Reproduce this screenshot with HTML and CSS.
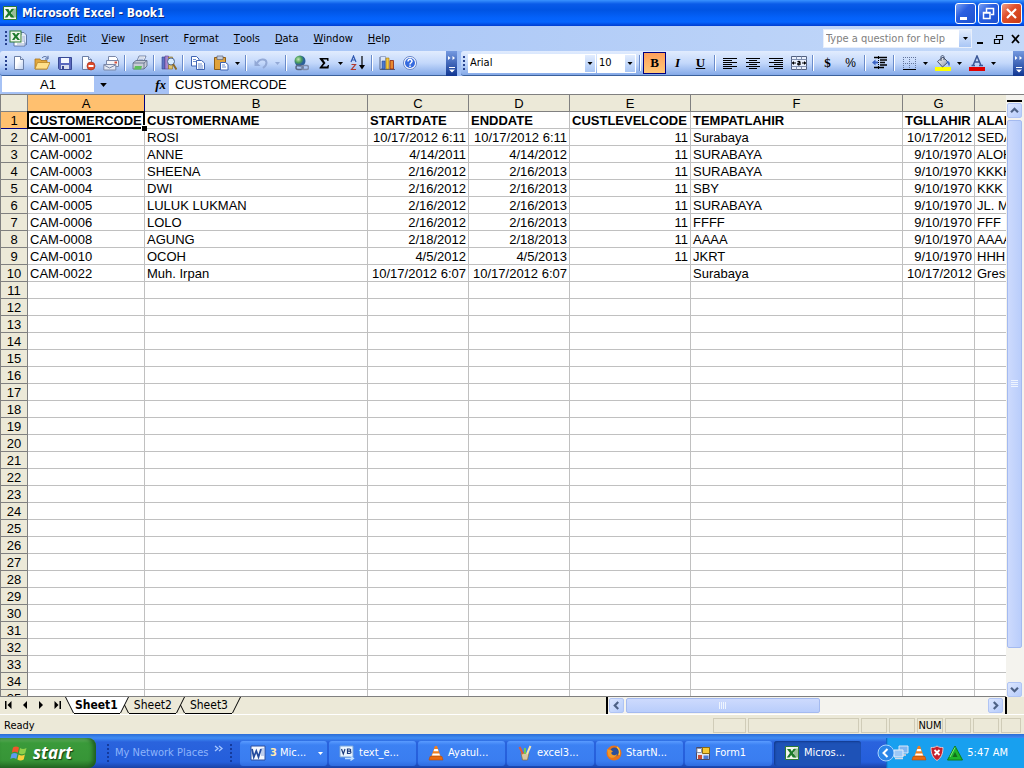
FILE: index.html
```html
<!DOCTYPE html>
<html lang="en">
<head>
<meta charset="utf-8">
<title>Microsoft Excel - Book1</title>
<link rel="stylesheet" href="styles.css">
</head>
<body>
<svg class="defs" aria-hidden="true">
  <defs>
    <linearGradient id="paper" x1="0" y1="0" x2="1" y2="1"><stop offset="0.4" stop-color="#fff"/><stop offset="1" stop-color="#b9cdf0"/></linearGradient>
    <linearGradient id="metal" x1="0" y1="0" x2="1" y2="1"><stop offset="0" stop-color="#fff"/><stop offset="1" stop-color="#8a93a8"/></linearGradient>
    <radialGradient id="globe" cx="0.35" cy="0.35"><stop offset="0" stop-color="#bfe6b0"/><stop offset="0.6" stop-color="#4a9d5c"/><stop offset="1" stop-color="#2b5f9a"/></radialGradient>
  </defs>
  <symbol id="excel" viewBox="0 0 16 16">
    <path d="M1.500 1.500h13v13h-13z" fill="#f2f7ee" stroke="#2d7a35"/>
    <path d="M10 3h4v10h-4" fill="#c9dcc4"/>
    <path d="M10 5h4M10 7h4M10 9h4M10 11h4" stroke="#6fa46f"/>
    <path d="M3 4h3.400l1.400 2.400L9.400 4H12L9 8l3.300 4.500H8.900L7.200 10l-1.800 2.500H2.700L6 8z" fill="#1e7a2c"/>
  </symbol>
  <symbol id="down" viewBox="0 0 5 3"><path d="M0 0h5L2.500 3z" fill="currentColor"/></symbol>
  <symbol id="cone" viewBox="0 0 16 16">
    <path d="M7 1h2l4 11H3z" fill="#f08020"/><path d="M6.300 4h3.400l.8 2.300h-5zM4.700 8.500h6.600l.7 2H4z" fill="#fff"/><path d="M2 11.500h12l1 3.500H1z" fill="#e86a10" stroke="#b94c08" stroke-width=".6"/>
  </symbol>
</svg>

<header class="titlebar">
  <svg class="i16"><use href="#excel"/></svg>
  <h1>Microsoft Excel - Book1</h1>
  <div class="winbtns">
    <button aria-label="Minimize"><svg viewBox="0 0 19 19"><path d="M4 13h7v3H4z" fill="#fff"/></svg></button>
    <button aria-label="Restore"><svg viewBox="0 0 19 19"><path d="M7.500 8V4.500h7v6H12M7 4.500h8" fill="none" stroke="#fff" stroke-width="1.500"/><path d="M4.500 8.500h6.500v6H4.500zM4 9h7.500" fill="none" stroke="#fff" stroke-width="1.500"/></svg></button>
    <button class="close" aria-label="Close"><svg viewBox="0 0 19 19"><path d="M5 5l9 9M14 5l-9 9" stroke="#fff" stroke-width="2.200"/></svg></button>
  </div>
</header>

<nav class="menubar" aria-label="Menu">
  <span class="grip"></span>
  <svg class="doc" viewBox="0 0 18 18"><path d="M5 4h11v12H5z" fill="#fff" stroke="#6079a8"/><path d="M12 2.500h3l2.500 2.500v10" fill="#dfe8fa" stroke="#6079a8"/><path d="M13 7h3M13 9h3M13 11h3M8 14h7" stroke="#9cb0d5"/><rect x="1" y="1" width="11" height="11" fill="#eef6ea" stroke="#2d7a35"/><path d="M3 3h2.500L7 5l1.500-2H11L8.200 6.500 11 10H8.500L6.800 8 5.300 10H3l2.500-3.500z" fill="#1e7a2c"/></svg>
  <button><u>F</u>ile</button>
  <button><u>E</u>dit</button>
  <button><u>V</u>iew</button>
  <button><u>I</u>nsert</button>
  <button>F<u>o</u>rmat</button>
  <button><u>T</u>ools</button>
  <button><u>D</u>ata</button>
  <button><u>W</u>indow</button>
  <button><u>H</u>elp</button>
  <div class="ask">
    <input type="text" aria-label="Type a question for help" placeholder="Type a question for help">
    <button aria-label="Recent questions"><svg class="arrow"><use href="#down"/></svg></button>
  </div>
  <div class="mdi">
    <button aria-label="Minimize workbook"><svg viewBox="0 0 12 12"><path d="M2 9h6v2H2z"/></svg></button>
    <button aria-label="Restore workbook"><svg viewBox="0 0 12 12"><path d="M4.500 5V2.500h6v4H8M4 2.500h7M2.500 6.500h5v4h-5zM2 6.500h6" fill="none" stroke="#000" stroke-width="1.200"/></svg></button>
    <button aria-label="Close workbook"><svg viewBox="0 0 12 12"><path d="M3 2l7 8M10 2l-7 8" stroke="#000" stroke-width="1.800"/></svg></button>
  </div>
</nav>

<div class="toolbars">
  <div class="toolbar standard" role="toolbar" aria-label="Standard">
    <span class="grip"></span>
    <button aria-label="New"><svg class="i16" viewBox="0 0 16 16"><path d="M3.500 1.500h6l3 3v10h-9z" fill="url(#paper)" stroke="#6b7fa6"/><path d="M9.500 1.500v3h3" fill="#dbe6f9" stroke="#6b7fa6"/></svg></button>
    <button aria-label="Open"><svg class="i16" viewBox="0 0 16 16"><path d="M1 4h5l1 1.500h6V14H1z" fill="#e3a83c" stroke="#a8741c" stroke-width=".8"/><path d="M3.500 7.500H16L13 14H1z" fill="#ffe08a" stroke="#b6852a" stroke-width=".8"/><path d="M8 3c2-2 4-2 5.500 0M14 .8V4h-3" fill="none" stroke="#48639c"/></svg></button>
    <button aria-label="Save"><svg class="i16" viewBox="0 0 16 16"><path d="M1.500 2.500h13v12h-12l-1-1z" fill="#5a68bd" stroke="#384a94"/><path d="M4 3h8v5H4z" fill="#f4f7ff"/><path d="M4 10h8v4H4z" fill="#d7dcee"/><path d="M5 11h2v3H5z" fill="#38458f"/></svg></button>
    <button aria-label="Permission"><svg class="i16" viewBox="0 0 16 16"><path d="M2.500 1.500h6l3 3v10h-9z" fill="url(#paper)" stroke="#6b7fa6"/><path d="M8.500 1.500v3h3" fill="#dbe6f9" stroke="#6b7fa6"/><circle cx="11" cy="11" r="4" fill="#dc4a2a" stroke="#a22a12" stroke-width=".6"/><path d="M8.500 10h5v2h-5z" fill="#fff"/></svg></button>
    <button aria-label="E-mail"><svg class="i16" viewBox="0 0 16 16"><path d="M5.500 5V1.500h7l2 2V9" fill="#fff" stroke="#7b88a8"/><path d="M3.500 5.500h12v6h-12z" fill="#f4f4f8" stroke="#7b88a8"/><path d="M.8 9.500h12v5.500H.8z" fill="#e4e8f2" stroke="#7b88a8"/><path d="M1 10l5.500 3L12.500 10" fill="none" stroke="#7b88a8"/><path d="M11.500 6.500h2.500v2h-2.500z" fill="#d8503a"/></svg></button>
    <span class="sep"></span>
    <button aria-label="Print"><svg class="i16" viewBox="0 0 16 16"><path d="M5 6l2-5h7l-2 5z" fill="#fff" stroke="#5d6f95" stroke-width=".8"/><path d="M1 8l3-2.500h11V11l-3 3H1z" fill="#c7ccd6" stroke="#596783" stroke-width=".8"/><path d="M1 8h11l3-2.500M12 8v6" fill="none" stroke="#596783" stroke-width=".8"/><path d="M3 11h7l-1 3.500H2z" fill="#5fbf5b"/><path d="M7 3h5M6.500 4.500h5" stroke="#8aa0cc" stroke-width=".7"/></svg></button>
    <span class="sep"></span>
    <button aria-label="Research"><svg class="i16" viewBox="0 0 16 16"><path d="M1 2h3v12H1z" fill="#5d72c4" stroke="#33458e" stroke-width=".6"/><path d="M4 1h3.500v13H4z" fill="#a886cf" stroke="#5e3f91" stroke-width=".6"/><path d="M7.500 2h4v12h-4z" fill="#e2c268" stroke="#8b6d20" stroke-width=".6"/><circle cx="10" cy="6.500" r="3.500" fill="#d8ecff" stroke="#4d6590"/><path d="M12 9l3.500 5.500" stroke="#8a6a2a" stroke-width="2"/></svg></button>
    <span class="sep"></span>
    <button aria-label="Copy"><svg class="i16" viewBox="0 0 16 16"><path d="M1.500 1.500h5l2.500 2.500v7H1.500z" fill="#fff" stroke="#3f64b3"/><path d="M6.500 5.500h5L14.500 8v6.500h-8z" fill="#fff" stroke="#3f64b3"/><path d="M3 4.500h3M3 6.500h3M8 9h4M8 11h5M8 13h5" stroke="#6c8dcf"/></svg></button>
    <button aria-label="Paste"><svg class="i16" viewBox="0 0 16 16"><path d="M1.500 2.500h11v12h-11z" fill="#e0a23a" stroke="#8c5d18"/><path d="M4 1h6v3.500H4z" fill="#c6ccd8" stroke="#59637c" stroke-width=".7"/><path d="M7.500 7.500h5l2.500 2v5.500H7.500z" fill="#fff" stroke="#3f64b3"/><path d="M9 10h3M9 12h4" stroke="#6c8dcf"/></svg></button>
    <button class="drop" aria-label="Paste options"><svg class="arrow"><use href="#down"/></svg></button>
    <span class="sep"></span>
    <button class="off" aria-label="Undo" disabled><svg class="i16" viewBox="0 0 16 16"><path d="M4 8.500C6 3.500 13 3 13.500 7.500c.2 2.500-1.500 4-3.500 5.500" fill="none" stroke="#93a9d6" stroke-width="2"/><path d="M1.500 5v6h6z" fill="#93a9d6"/></svg></button>
    <button class="drop off" aria-label="Undo list" disabled><svg class="arrow"><use href="#down"/></svg></button>
    <span class="sep"></span>
    <button aria-label="Insert Hyperlink"><svg class="i16" viewBox="0 0 16 16"><circle cx="7" cy="6" r="5.500" fill="url(#globe)"/><rect x="3" y="10.500" width="7" height="4" rx="2" fill="none" stroke="#5a6885" stroke-width="1.500"/><rect x="8.500" y="10.500" width="7" height="4" rx="2" fill="none" stroke="#7e8cab" stroke-width="1.500"/></svg></button>
    <button aria-label="AutoSum"><svg class="i16" viewBox="0 0 16 16"><path d="M3.500 3h9v3h-1l-.7-1.500H7L9.500 8 6.500 11.500h4.500L12 10h1l-.5 3.500h-9v-.7L7 8.300 3.500 3.700z"/></svg></button>
    <button class="drop" aria-label="AutoSum options"><svg class="arrow"><use href="#down"/></svg></button>
    <button aria-label="Sort Ascending"><svg class="i16" viewBox="0 0 16 16"><path d="M1 7l2.500-6L6 7M2 5h3" fill="none" stroke="#2e57b0" stroke-width="1.200"/><path d="M1.500 9.500h4l-4 5h4.500" fill="none" stroke="#b0392e" stroke-width="1.200"/><path d="M12 1v12" stroke="#000" stroke-width="1.200"/><path d="M9 10h6l-3 4.500z"/></svg></button>
    <span class="sep"></span>
    <button aria-label="Chart Wizard"><svg class="i16" viewBox="0 0 16 16"><path d="M1 2v12.500h15" fill="none" stroke="#52607f"/><path d="M1.500 1.500h5v12h-5z" fill="#dbe6f9" stroke="#7b8db5" stroke-width=".7"/><path d="M3 6h3v8H3z" fill="#4a78d0" stroke="#274a92" stroke-width=".6"/><path d="M7 3h3v11H7z" fill="#f4c63c" stroke="#9c7610" stroke-width=".6"/><path d="M11 5.500h3.500V14H11z" fill="#e8892f" stroke="#8c2412" stroke-width=".8"/></svg></button>
    <button aria-label="Help"><svg class="i16" viewBox="0 0 16 16"><circle cx="8" cy="8" r="6.500" fill="#fff" stroke="#6583c8"/><circle cx="8" cy="8" r="5" fill="#356adf"/><path d="M6 6.500c0-3 4.200-2.700 4 0-.2 1.300-2 1.300-2 3M8 10.500v1.600" fill="none" stroke="#fff" stroke-width="1.500"/></svg></button>
    <button class="more" aria-label="Standard toolbar options"><svg viewBox="0 0 8 22"><path d="M0 4l2.500 2L0 8zM4.500 4L7 6 4.500 8zM1 15h6v1H1zM1 17.500h6l-3 3z" fill="#fff"/></svg></button>
  </div>
  <div class="toolbar formatting" role="toolbar" aria-label="Formatting">
    <span class="grip"></span>
    <span class="combo font"><select aria-label="Font"><option>Arial</option></select><svg class="arrow"><use href="#down"/></svg></span>
    <span class="combo size"><select aria-label="Font Size"><option>10</option></select><svg class="arrow"><use href="#down"/></svg></span>
    <span class="sep"></span>
    <button class="on serif" aria-pressed="true" aria-label="Bold"><b>B</b></button>
    <button class="serif" aria-label="Italic"><i>I</i></button>
    <button class="serif" aria-label="Underline"><u>U</u></button>
    <span class="sep"></span>
    <button aria-label="Align Left"><svg class="i16" viewBox="0 0 16 16"><path d="M1 3.500h14M1 5.500h9M1 7.500h14M1 9.500h9M1 11.500h14M1 13.500h9" stroke="#000"/></svg></button>
    <button aria-label="Center"><svg class="i16" viewBox="0 0 16 16"><path d="M1 3.500h14M4 5.500h8M1 7.500h14M4 9.500h8M1 11.500h14M4 13.500h8" stroke="#000"/></svg></button>
    <button aria-label="Align Right"><svg class="i16" viewBox="0 0 16 16"><path d="M1 3.500h14M6 5.500h9M1 7.500h14M6 9.500h9M1 11.500h14M6 13.500h9" stroke="#000"/></svg></button>
    <button aria-label="Merge and Center"><svg class="i16" viewBox="0 0 16 16"><path d="M.5 1.500h15v13H.5z" fill="#e9f0fd" stroke="#53617f"/><path d="M.5 4.500h15M.5 11.500h15M5.500 1.500v3M10.500 1.500v3M5.500 11.500v3M10.500 11.500v3" stroke="#8090b0"/><path d="M1 8h4M11 8h4" stroke="#000"/><path d="M3 6v4L1 8zM13 6v4l2-2z"/><path d="M6.500 6.800c1-.8 2.500-.6 2.500.5V10M9 8c-3-.3-3 2.200-.5 1.800" fill="none" stroke="#000" stroke-width="1.200"/></svg></button>
    <span class="sep"></span>
    <button class="serif" aria-label="Currency Style">$</button>
    <button class="percent" aria-label="Percent Style">%</button>
    <span class="sep"></span>
    <button aria-label="Decrease Indent"><svg class="i16" viewBox="0 0 16 16"><path d="M2 2.500h13M8 5h7M8 7.500h5M8 10h7M2 12.500h10" stroke="#000" stroke-width="1.500"/><path d="M6.500 1v14" stroke="#000" stroke-dasharray="1 1"/><path d="M0 7.500l3.500-3v2H6v2H3.500v2z" fill="#3a63c4"/></svg></button>
    <span class="sep"></span>
    <button aria-label="Borders"><svg class="i16" viewBox="0 0 16 16"><path d="M2.500 2v12M8.500 2v12M14.500 2v12M2 2.500h12M2 8.500h12" stroke="#63759b" stroke-dasharray="1 1"/><path d="M2 14.500h13" stroke="#000"/></svg></button>
    <button class="drop" aria-label="Border options"><svg class="arrow"><use href="#down"/></svg></button>
    <button aria-label="Fill Color"><svg class="i16" viewBox="0 0 16 16"><path d="M0 12h16v4H0z" fill="#ffff00"/><path d="M2.500 6.500L8 2l5 5-5.500 5z" fill="url(#metal)" stroke="#46536e"/><path d="M6 6V2c0-2 3-2 3 0v3" fill="none" stroke="#46536e"/><path d="M12.500 6c2.500.5 3 3 1.500 5.500-.8-2-1-3.500-3-4.500z" fill="#3f6cc9"/></svg></button>
    <button class="drop" aria-label="Fill Color options"><svg class="arrow"><use href="#down"/></svg></button>
    <button aria-label="Font Color"><svg class="i16" viewBox="0 0 16 16"><path d="M0 12h16v4H0z" fill="#e00000"/><path d="M4 10.500L8 1l4 9.500M5.500 7h5M2.500 10.500h3.500M10 10.500h4" fill="none" stroke="#3b5796" stroke-width="1.500"/></svg></button>
    <button class="drop" aria-label="Font Color options"><svg class="arrow"><use href="#down"/></svg></button>
    <button class="more" aria-label="Formatting toolbar options"><svg viewBox="0 0 8 22"><path d="M0 4l2.500 2L0 8zM4.500 4L7 6 4.500 8zM1 15h6v1H1zM1 17.500h6l-3 3z" fill="#fff"/></svg></button>
  </div>
</div>

<div class="formulabar">
  <input class="namebox" type="text" aria-label="Name Box" value="A1">
  <button class="namedrop" aria-label="Names"><svg class="arrow"><use href="#down"/></svg></button>
  <button class="fx" aria-label="Insert Function"><i>fx</i></button>
  <input class="formula" type="text" aria-label="Formula" value="CUSTOMERCODE">
</div>

<main class="sheet">
  <div class="viewport">
    <table class="grid">
      <colgroup><col class="w-row"><col class="w-a"><col class="w-b"><col class="w-c"><col class="w-c"><col class="w-e"><col class="w-f"><col class="w-g"><col class="w-h"></colgroup>
      <thead><tr><th></th><th class="current">A</th><th>B</th><th>C</th><th>D</th><th>E</th><th>F</th><th>G</th><th></th></tr></thead>
      <tbody id="rows"></tbody>
    </table>
  </div>
  <div class="vscroll">
    <span class="split"></span>
    <button aria-label="Scroll up"><svg viewBox="0 0 15 15"><path d="M3.500 9.500l4-4 4 4" /></svg></button>
    <div class="track"><div class="thumb"><svg viewBox="0 0 8 8"><path d="M0 .5h7M0 2.500h7M0 4.500h7M0 6.500h7" stroke="#eef4fe"/></svg></div></div>
    <button aria-label="Scroll down"><svg viewBox="0 0 15 15"><path d="M3.500 5.500l4 4 4-4" /></svg></button>
  </div>
</main>

<div class="sheetbar">
  <div class="tabs">
    <div class="tabnav">
      <button aria-label="First sheet"><svg viewBox="0 0 8 8"><path d="M0 0h1.500v8H0zM6.500 0v8L2.500 4z"/></svg></button>
      <button aria-label="Previous sheet"><svg viewBox="0 0 8 8"><path d="M6 0v8L2 4z"/></svg></button>
      <button aria-label="Next sheet"><svg viewBox="0 0 8 8"><path d="M2 0v8l4-4z"/></svg></button>
      <button aria-label="Last sheet"><svg viewBox="0 0 8 8"><path d="M1.500 0v8l4-4zM6.500 0H8v8H6.500z"/></svg></button>
    </div>
    <svg class="slash" viewBox="0 0 9 17"><path d="M0 0h9v16H8z" fill="#fff"/><path d="M.5 0l8 16" stroke="#000"/></svg>
    <button class="active">Sheet1</button>
    <svg class="slash" viewBox="0 0 9 17"><path d="M0 0h9L1 16H0z" fill="#fff"/><path d="M4.500 8l4 8H.5z" fill="#ece9d8"/><path d="M8.500 0l-8 16M4.500 8l4 8" stroke="#000"/></svg>
    <button>Sheet2</button>
    <svg class="slash" viewBox="0 0 9 17"><path d="M8.500 0l-8 16M4.500 8l4 8" stroke="#000" /></svg>
    <button>Sheet3</button>
    <svg class="slash" viewBox="0 0 9 17"><path d="M8.500 0l-8 16" stroke="#000"/></svg>
    <span class="rest"></span>
  </div>
  <div class="hscroll">
    <button aria-label="Scroll left"><svg viewBox="0 0 15 15"><path d="M9.500 3.500l-4 4 4 4" /></svg></button>
    <div class="track"><div class="thumb"><svg viewBox="0 0 8 8"><path d="M.5 0v7M2.500 0v7M4.500 0v7M6.500 0v7" stroke="#eef4fe"/></svg></div></div>
    <button aria-label="Scroll right"><svg viewBox="0 0 15 15"><path d="M5.500 3.500l4 4-4 4" /></svg></button>
  </div>
  <span class="corner"></span>
</div>

<div class="status">
  <span class="ready">Ready</span>
  <span class="pane first"></span><span class="pane wide"></span><span class="pane"></span><span class="pane"></span><span class="pane">NUM</span><span class="pane"></span><span class="pane"></span><span class="pane last"></span>
</div>

<footer class="taskbar">
  <button class="start"><svg viewBox="0 0 18 18"><path d="M3 3.500c2-1.500 4-1.500 6 0L7.800 8.700c-2-1.400-4-1.400-6 0z" fill="#f0562c"/><path d="M10 4c2 1.300 4 1.300 6.500 0L15.200 9.200c-2.200 1.300-4.200 1.300-6.300 0z" fill="#8fd04a"/><path d="M1.500 10c2-1.400 4-1.400 6 0L6.300 15c-2-1.300-4-1.300-6 0z" fill="#5c9bf0"/><path d="M8.600 10.500c2 1.300 4 1.300 6.300 0l-1.200 5c-2.200 1.300-4.300 1.300-6.300 0z" fill="#fbd03c"/></svg><span>start</span></button>
  <div class="deskband"><span class="grip"></span><span>My Network Places</span><svg viewBox="0 0 10 8"><path d="M1 1l3 2.500L1 6M5 1l3 2.500L5 6" fill="none" stroke="#a6c6ff" stroke-width="1.300"/></svg></div>
  <span class="grip"></span>
  <div class="tasks">
    <button><svg class="i16" viewBox="0 0 16 16"><path d="M1 1h14v14H1z" fill="#f4f8ff" stroke="#2c4f9e"/><path d="M11 4h3M11 6h3M11 8h3M11 10h3" stroke="#89a5da"/><path d="M2 4l1.800 8L6.300 6l2.200 6L11 4" fill="none" stroke="#244a9d" stroke-width="1.800"/></svg><span><b>3</b> Mic...</span><svg class="arrow last"><use href="#down"/></svg></button>
    <button><svg class="i16" viewBox="0 0 16 16"><path d="M1 1h13v11H1z" fill="#eaf5ff" stroke="#7aa6d8"/><path d="M2.500 4l1.800 5L6 4M8.500 4v4.500h2c2 0 2-2.300 0-2.300 1.600 0 1.600-2.200 0-2.200zM8.500 6.200h2" fill="none" stroke="#1c3c7c" stroke-width="1.200"/><path d="M6 13.500h7.500M11.500 11l3 2.500-3 2" fill="none" stroke="#bfe0ff" stroke-width="1.300"/></svg><span>text_e...</span></button>
    <button><svg class="i16"><use href="#cone"/></svg><span>Ayatul...</span></button>
    <button><svg class="i16" viewBox="0 0 16 16"><path d="M4 8h8l-1.500 7h-5z" fill="#d9c8a0" stroke="#8a6c3a" stroke-width=".7"/><path d="M6 9L2.500 2" stroke="#e25b35" stroke-width="2"/><path d="M8 9V3" stroke="#6fca56" stroke-width="2"/><path d="M10 9l3.500-8" stroke="#f3e6b1" stroke-width="2"/></svg><span>excel3...</span></button>
    <button><svg class="i16" viewBox="0 0 16 16"><circle cx="8" cy="8" r="7.500" fill="#e8731c"/><circle cx="8.500" cy="7" r="4.500" fill="#2b4f9b"/><path d="M1 4c1 1 2 .5 4 1l2 1.500c-2 .5-2 2-1 3 2 1.500 4 .5 5.500-.5C10 13 5 14 2.500 11z" fill="#f49a28"/><path d="M11 2c2.500 2 3 5 2 8" fill="none" stroke="#ffc63c" stroke-width="1.300"/></svg><span>StartN...</span></button>
    <button><svg class="i16" viewBox="0 0 16 16"><path d="M1.500 2.500h13v12h-13z" fill="#dfe6f4" stroke="#4a4a6a"/><path d="M2 3.500h4.500v4H2z" fill="#fff" stroke="#8894b0"/><path d="M7.500 2.500h7v6h-7z" fill="#f6c936" stroke="#8a6a10"/><path d="M3 10h4v4H3z" fill="#c94c36"/><path d="M8.500 10.500h5V14h-5z" fill="#4c7ad2"/></svg><span>Form1</span></button>
    <button class="current"><svg class="i16"><use href="#excel"/></svg><span>Micros...</span></button>
  </div>
  <div class="tray">
    <button class="hide" aria-label="Hide inactive icons"><svg viewBox="0 0 18 18"><circle cx="9" cy="9" r="8" fill="#2a86e8" stroke="#a9d3ff"/><path d="M10.500 5l-4 4 4 4" fill="none" stroke="#fff" stroke-width="2"/></svg></button>
    <svg class="i16" viewBox="0 0 16 16"><path d="M6 1h9v7H6z" fill="#7eb6f2" stroke="#dce9f8"/><path d="M9 9h4v2H9z" fill="#b9c5d8"/><path d="M1 5h9v7H1z" fill="#9cc8f7" stroke="#e6effa"/><path d="M2 13.500h8" stroke="#d5dbe6" stroke-width="1.500"/></svg>
    <svg class="i16"><use href="#cone"/></svg>
    <svg class="i16" viewBox="0 0 16 16"><path d="M8 1c2 1.500 4 1.500 6 1.500C14 9 12 13 8 15.500 4 13 2 9 2 2.500 4 2.500 6 2.500 8 1z" fill="#c8202c" stroke="#e9c3c6"/><path d="M5.500 5l5 5M10.500 5l-5 5" stroke="#fff" stroke-width="1.800"/></svg>
    <svg class="i16" viewBox="0 0 16 16"><path d="M8 1l7.500 14H.5z" fill="#1fb52c" stroke="#0e7d1b"/><path d="M8 7l2.500 5h-5z" fill="#116d1c"/><path d="M8 2.500L3 12" stroke="#7fe57f"/></svg>
    <time>5:47 AM</time>
  </div>
</footer>
<script src="grid.js"></script>
</body>
</html>
```
FILE: styles.css
```css
* { box-sizing: border-box; }
html, body { height: 100%; }
body {
  margin: 0;
  display: flex;
  flex-direction: column;
  overflow: hidden;
  font: 11px/14px "DejaVu Sans Condensed", "Noto Sans", sans-serif;
  color: #000;
  background: #ece9d8;
}
button, input, select { font: inherit; color: inherit; border: 0; padding: 0; margin: 0; background: none; border-radius: 0; }
button { display: flex; align-items: center; justify-content: center; white-space: nowrap; flex: none; }
svg { display: block; flex: none; }
.defs { position: absolute; width: 0; height: 0; }
.i16 { width: 16px; height: 16px; }
.arrow { width: 5px; height: 3px; }
.grip { flex: none; width: 2px; height: 15px; background: repeating-linear-gradient(#27418f 0 2px, transparent 2px 4px); }

.titlebar {
  flex: none; height: 26px; display: flex; align-items: center; gap: 4px; padding: 0 2px;
  background: linear-gradient(#3a93ff 0, #0a5be8 4px, #0054e3 10px, #0462fb 18px, #0565fe 22px, #003dd0 26px);
}
.titlebar h1 { flex: 1; margin: 0; font: bold 12px/16px "DejaVu Sans Condensed", sans-serif; color: #fff; text-shadow: 1px 1px #0a2a80; }
.winbtns { display: flex; gap: 2px; }
.winbtns button { width: 21px; height: 21px; border: 1px solid #fff; border-radius: 3px; background: linear-gradient(135deg, #7ba2f4, #2a5fe0 40%, #1d51cf); }
.winbtns .close { background: linear-gradient(135deg, #f0a088, #e0502c 40%, #c83a14); }
.winbtns svg { width: 19px; height: 19px; }

.menubar { flex: none; height: 25px; display: flex; align-items: center; gap: 1px; padding: 0 3px 0 5px; background: linear-gradient(90deg, #9ebef5, #c4d9f9); }
.menubar .doc { width: 18px; height: 18px; margin: 0 0 0 1px; }
.menubar > button { height: 19px; padding: 0 7px; }
.ask { display: flex; margin-left: auto; width: 149px; height: 19px; background: #fff; border: 1px solid #e8effb; }
.ask input { flex: 1; min-width: 0; padding: 0 2px; }
.ask input::placeholder { color: #808080; opacity: 1; }
.ask button { width: 12px; background: linear-gradient(#e3edfe, #a9c6f5); }
.mdi { display: flex; gap: 5px; margin-left: 2px; }
.mdi svg { width: 12px; height: 12px; }

.toolbars { flex: none; display: flex; gap: 4px; height: 25px; background: #9ebef5; }
.toolbar { display: flex; align-items: center; height: 25px; border-bottom: 1px solid #3b619c; border-radius: 3px 0 0 3px; background: linear-gradient(#e1ecfe, #c3d8fb 50%, #84a9e8); }
.standard { flex: 0 0 457px; padding-left: 5px; }
.formatting { flex: 1; padding-left: 2px; }
.toolbar > button { width: 23px; height: 22px; }
.toolbar > .drop { width: 11px; }
.toolbar .off { color: #93a9d6; }
.toolbar > .more { width: 11px; height: 25px; margin-left: auto; background: linear-gradient(#7499e0, #0f3591); }
.more svg { width: 8px; height: 22px; }
.toolbar > .on { border: 1px solid #000080; background: linear-gradient(#ff9f5a, #ffc878); }
.sep { flex: none; width: 2px; height: 16px; margin: 0 2px; background: #6a8ccb; border-right: 1px solid #fff; }
.serif { font: bold 13px/16px "Liberation Serif", serif; }
.percent { font: 12px/16px "Liberation Sans", sans-serif; }
.combo { position: relative; display: flex; height: 19px; background: #fff; margin-right: 1px; }
.combo select { appearance: none; width: 100%; padding: 0 14px 0 2px; }
.combo .arrow { position: absolute; right: 0; top: 0; width: 12px; height: 19px; padding: 7px 2px; border: 1px solid #fff; background: linear-gradient(#e3edfe, #a9c6f5); pointer-events: none; }
.font { width: 128px; margin-left: 3px; }
.size { width: 39px; }

.formulabar { flex: none; display: flex; height: 18px; padding-left: 2px; background: #a6c2f5; font: 13px/17px "Liberation Sans", sans-serif; }
.namebox { width: 92px; height: 16px; background: #fff; text-align: center; }
.namedrop { width: 18px; }
.namedrop .arrow { width: 7px; height: 4px; }
.fx { width: 57px; padding-right: 3px; justify-content: flex-end; font: bold 13px/16px "Liberation Serif", serif; }
.formula { flex: 1; min-width: 0; height: 16px; background: #fff; padding: 0 6px; box-shadow: 0 2px #fff; }

.sheet { flex: 1; min-height: 0; display: flex; border-top: 1px solid #808080; }
.viewport { flex: 1; min-width: 0; overflow: hidden; background: #fff; border-left: 1px solid #808080; border-bottom: 1px solid #808080; }
.grid { table-layout: fixed; width: 1200px; border-collapse: separate; border-spacing: 0; font: 13px/15px "Liberation Sans", sans-serif; }
.grid th, .grid td { height: 17px; padding: 1px 2px 0; overflow: hidden; white-space: nowrap; border-right: 1px solid #c0c0c0; border-bottom: 1px solid #c0c0c0; }
.grid th { font-weight: normal; text-align: center; background: #ece9d8; border-color: #808080; }
.grid th.current { background: #ffc06f; border-color: #000080; }
.grid .head td { font-weight: bold; }
.grid .num { text-align: right; }
.grid .selected { position: relative; overflow: visible; }
.selected::before { content: ""; position: absolute; inset: -1px; border: 2px solid #000; }
.selected::after { content: ""; position: absolute; right: -3px; bottom: -3px; width: 5px; height: 5px; background: #000; border: 1px solid #fff; border-width: 1px 0 0 1px; }
.w-row { width: 27px; } .w-a { width: 117px; } .w-b { width: 223px; } .w-c { width: 101px; }
.w-e { width: 121px; } .w-f { width: 212px; } .w-g { width: 72px; }

.vscroll { flex: none; width: 18px; padding: 5px 2px 0 1px; display: flex; flex-direction: column; background: #f4f3ee; }
.vscroll .split { flex: none; height: 2px; background: #000; margin-bottom: 1px; }
.vscroll button, .hscroll button { width: 15px; height: 15px; border-radius: 2px; border: 1px solid #b0c4f4; background: linear-gradient(135deg, #dce6fe, #b6ccfb); }
.vscroll button svg, .hscroll button svg { width: 13px; height: 13px; fill: none; stroke: #4d6185; stroke-width: 2.5; }
.vscroll .track { flex: 1; padding-top: 2px; }
.vscroll .thumb { height: 94%; }
.thumb { display: flex; align-items: center; justify-content: center; border: 1px solid #a4baf0; border-radius: 2px; background: linear-gradient(90deg, #cddafd, #b9cdfb); }
.thumb svg { width: 8px; height: 8px; }

.sheetbar { flex: none; height: 17px; display: flex; }
.tabs { flex: 20 1 0; display: flex; }
.tabnav { display: flex; padding-left: 1px; }
.tabnav button { width: 16px; height: 16px; }
.tabnav svg { width: 8px; height: 8px; }
.slash { width: 9px; height: 17px; }
.tabs > button { height: 17px; padding: 0 4px 0 5px; font-size: 12px; border-bottom: 1px solid #000; }
.tabs > .active { font-weight: bold; background: #fff; padding: 0 2px 0 1px; }
.rest { flex: 1; }
.hscroll { flex: 13 1 0; display: flex; align-items: center; border-left: 2px solid #000; border-right: 2px solid #000; background: #f4f3ee; padding: 0 2px 0 1px; }
.hscroll .track { flex: 1; padding: 0 2px; }
.hscroll .thumb { width: 54%; height: 15px; background: linear-gradient(#cddafd, #b9cdfb); }
.corner { flex: 0 0 17px; }

.status { flex: none; height: 20px; display: flex; align-items: center; gap: 2px; padding: 2px 3px 0 4px; border-top: 1px solid #fff; }
.ready { flex: 1; }
.pane { width: 26px; height: 15px; border: 1px solid #d0ccb8; text-align: center; }
.pane.wide { width: 111px; }
.pane.first { width: 33px; }
.pane.last { width: 20px; }

.taskbar { flex: none; height: 34px; padding-top: 4px; display: flex; align-items: center; color: #fff; background: linear-gradient(#2a6cd6 0, #3f8cf3 4px, #2a63dd 8px, #245edb 28px, #1941a5 34px); }
.start { align-self: stretch; width: 96px; justify-content: flex-start; gap: 5px; padding-left: 10px; border-radius: 0 8px 8px 0; background: linear-gradient(#6ab866, #3a9a3a 5px, #379537 22px, #256b25); box-shadow: inset -3px 0 4px #1f5c1f; }
.start svg { width: 18px; height: 18px; }
.start span { font: italic bold 17px/20px "Open Sans", sans-serif; text-shadow: 1px 1px 1px #123a12; }
.taskbar .grip { height: 19px; background: repeating-linear-gradient(#143a9c 0 2px, transparent 2px 4px); }
.deskband { display: flex; align-items: center; gap: 6px; width: 123px; padding: 0 6px 0 0; margin-left: 11px; color: #8db4fb; white-space: nowrap; }
.deskband svg { width: 10px; height: 8px; margin: 0 0 8px auto; }
.tasks { flex: 1; min-width: 0; display: flex; gap: 2px; padding: 0 16px 0 8px; }
.tasks button { flex: 1 1 0; min-width: 0; height: 25px; justify-content: flex-start; gap: 4px; padding: 0 4px 0 10px; border-radius: 3px; background: linear-gradient(#5a9bff, #3c81f3 4px, #3a7df0 20px, #2f6ce0); }
.tasks .current { background: #1e52b7; box-shadow: inset 1px 1px 2px #123a8c; }
.tasks b { color: #ffe9b0; }
.tasks .last { margin-left: auto; }
.tray { align-self: stretch; position: relative; display: flex; align-items: center; gap: 2px; width: 147px; padding: 0 16px 0 8px; background: linear-gradient(90deg, transparent 9px, #0c59b9 9px, transparent 11px), linear-gradient(90deg, transparent 9px, #18a0ef 9px); }
.hide { width: 18px; height: 18px; position: absolute; left: -8px; }
.hide svg { width: 18px; height: 18px; }
.tray .hide { left: 0; }
.tray > .i16:first-of-type { margin-left: 8px; }
.tray time { margin-left: auto; white-space: nowrap; }
```
FILE: grid.js
```js
const data = [
  ["CUSTOMERCODE", "CUSTOMERNAME", "STARTDATE", "ENDDATE", "CUSTLEVELCODE", "TEMPATLAHIR", "TGLLAHIR", "ALAMAT"],
  ["CAM-0001", "ROSI", "10/17/2012 6:11", "10/17/2012 6:11", "11", "Surabaya", "10/17/2012", "SEDATI"],
  ["CAM-0002", "ANNE", "4/14/2011", "4/14/2012", "11", "SURABAYA", "9/10/1970", "ALOHA"],
  ["CAM-0003", "SHEENA", "2/16/2012", "2/16/2013", "11", "SURABAYA", "9/10/1970", "KKKK"],
  ["CAM-0004", "DWI", "2/16/2012", "2/16/2013", "11", "SBY", "9/10/1970", "KKK"],
  ["CAM-0005", "LULUK LUKMAN", "2/16/2012", "2/16/2013", "11", "SURABAYA", "9/10/1970", "JL. M"],
  ["CAM-0006", "LOLO", "2/16/2012", "2/16/2013", "11", "FFFF", "9/10/1970", "FFF"],
  ["CAM-0008", "AGUNG", "2/18/2012", "2/18/2013", "11", "AAAA", "9/10/1970", "AAAA"],
  ["CAM-0010", "OCOH", "4/5/2012", "4/5/2013", "11", "JKRT", "9/10/1970", "HHH"],
  ["CAM-0022", "Muh. Irpan", "10/17/2012 6:07", "10/17/2012 6:07", "", "Surabaya", "10/17/2012", "Gresik"]
];
const body = document.getElementById("rows");
for (let r = 0; r < 35; r++) {
  const tr = body.insertRow();
  const th = document.createElement("th");
  th.textContent = r + 1;
  tr.append(th);
  if (r === 0) {
    tr.className = "head";
    th.className = "current";
  }
  for (let c = 0; c < 8; c++) {
    const td = tr.insertCell();
    td.textContent = data[r] ? data[r][c] : "";
    if (r > 0 && /^\d/.test(td.textContent)) td.className = "num";
    if (r === 0 && c === 0) td.className = "selected";
  }
}
```
